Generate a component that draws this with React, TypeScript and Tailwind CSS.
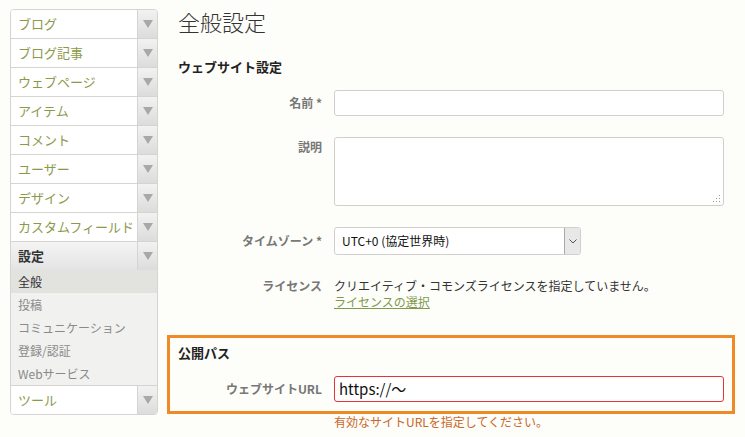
import React from 'react';

const font = { fontFamily: '"Noto Sans CJK JP", "Noto Sans", sans-serif' };

const menu = ['ブログ', 'ブログ記事', 'ウェブページ', 'アイテム', 'コメント', 'ユーザー', 'デザイン', 'カスタムフィールド'];
const sub = ['全般', '投稿', 'コミュニケーション', '登録/認証', 'Webサービス'];

const Arrow = () => (
  <div className="w-[20px] flex items-center justify-center border-l border-[#d6d4d0] bg-gradient-to-b from-[#f2f2f2] to-[#dcdcdc]">
    <span className="w-0 h-0 border-l-[5px] border-r-[5px] border-t-[8px] border-l-transparent border-r-transparent border-t-[#a8a8a8]" />
  </div>
);

const MenuRow = ({ label, first }: { label: string; first?: boolean }) => (
  <div className={`flex h-[28px] ${first ? '' : 'box-content border-t border-[#d6d4d0]'}`}>
    <div className="flex-1 flex items-center pl-[7px] text-[13px] text-[#8b9a4a] bg-white">{label}</div>
    <Arrow />
  </div>
);

const Label = ({ children }: { children: React.ReactNode }) => (
  <div className="w-[167px] shrink-0 pr-[12px] text-right text-[12px] font-bold text-[#777]">{children}</div>
);

export default function App() {
  return (
    <div className="w-[745px] h-[437px] bg-[#fdfdf9] flex overflow-hidden" style={font}>
      <div className="pl-[10px] pt-[9px] w-[167px] shrink-0">
        <div className="w-[148px] border border-[#d6d4d0] rounded-[4px] overflow-hidden bg-white">
          {menu.map((m, i) => (
            <MenuRow key={m} label={m} first={i === 0} />
          ))}
          <div className="flex h-[28px] box-content border-t border-[#d6d4d0] bg-gradient-to-b from-[#f4f4f4] to-[#e4e4e4]">
            <div className="flex-1 flex items-center pl-[7px] text-[13px] font-bold text-[#333]">設定</div>
            <Arrow />
          </div>
          <div className="bg-[#f1f1ef]">
            {sub.map((s, i) => (
              <div
                key={s}
                className={`h-[23px] flex items-center pl-[7px] text-[12px] ${i === 0 ? 'bg-[#e2e2df] text-[#333]' : 'text-[#8a8a8a]'}`}
              >
                {s}
              </div>
            ))}
          </div>
          <MenuRow label="ツール" />
        </div>
      </div>

      <div className="flex-1 pt-[4px]">
        <h1 className="pl-[11px] text-[22px] font-light text-[#333] leading-[34px]">全般設定</h1>
        <h2 className="pl-[11px] mt-[20px] text-[13px] font-bold text-[#222] leading-[18px]">ウェブサイト設定</h2>

        <div className="flex items-center mt-[14px]">
          <Label>名前 *</Label>
          <div className="w-[390px] h-[26px] border border-[#d2d0cc] rounded-[3px] bg-white" />
        </div>

        <div className="flex items-start mt-[21px]">
          <Label><div className="pt-[1px]">説明</div></Label>
          <div className="relative w-[390px] h-[69px] border border-[#d2d0cc] rounded-[3px] bg-white">
            <svg className="absolute right-[2px] bottom-[2px]" width="8" height="8" viewBox="0 0 8 8">
              <g fill="#999">
                <rect x="6" y="0" width="1" height="1" />
                <rect x="6" y="3" width="1" height="1" />
                <rect x="3" y="3" width="1" height="1" />
                <rect x="6" y="6" width="1" height="1" />
                <rect x="3" y="6" width="1" height="1" />
                <rect x="0" y="6" width="1" height="1" />
              </g>
            </svg>
          </div>
        </div>

        <div className="flex items-center mt-[21px]">
          <Label>タイムゾーン *</Label>
          <div className="w-[247px] h-[28px] flex border border-[#d2d0cc] rounded-[3px] bg-white overflow-hidden">
            <div className="flex-1 flex items-center pl-[7px] text-[12px] text-[#111]">UTC+0 (協定世界時)</div>
            <div className="w-[16px] flex items-center justify-center bg-[#e8e8e8] border-l border-[#aaa]">
              <svg width="8" height="5" viewBox="0 0 8 5">
                <path d="M0.5 0.5 L4 4 L7.5 0.5" stroke="#555" fill="none" strokeWidth="1" />
              </svg>
            </div>
          </div>
        </div>

        <div className="flex items-start mt-[23px]">
          <Label><div className="leading-[16px]">ライセンス</div></Label>
          <div className="text-[12px] leading-[16px] text-[#333]">
            <div>クリエイティブ・コモンズライセンスを指定していません。</div>
            <a className="text-[#7f9a4f] underline">ライセンスの選択</a>
          </div>
        </div>

        <div className="mt-[25px] mr-[10px] border-[3px] border-[#f08a24] pb-[9px]">
          <h2 className="pl-[8px] pt-[6px] text-[13px] font-bold text-[#222] leading-[18px]">公開パス</h2>
          <div className="flex items-center mt-[14px]">
            <div className="w-[164px] shrink-0 pr-[12px] text-right text-[12px] font-bold text-[#777]">ウェブサイトURL</div>
            <div className="w-[390px] h-[26px] flex items-center pl-[4px] border border-[#e8323a] rounded-[3px] bg-white text-[15px] text-[#111]">
              https://～
            </div>
          </div>
        </div>
        <div className="pl-[167px] text-[12px] leading-[16px] text-[#c8682a]">有効なサイトURLを指定してください。</div>
      </div>
    </div>
  );
}
